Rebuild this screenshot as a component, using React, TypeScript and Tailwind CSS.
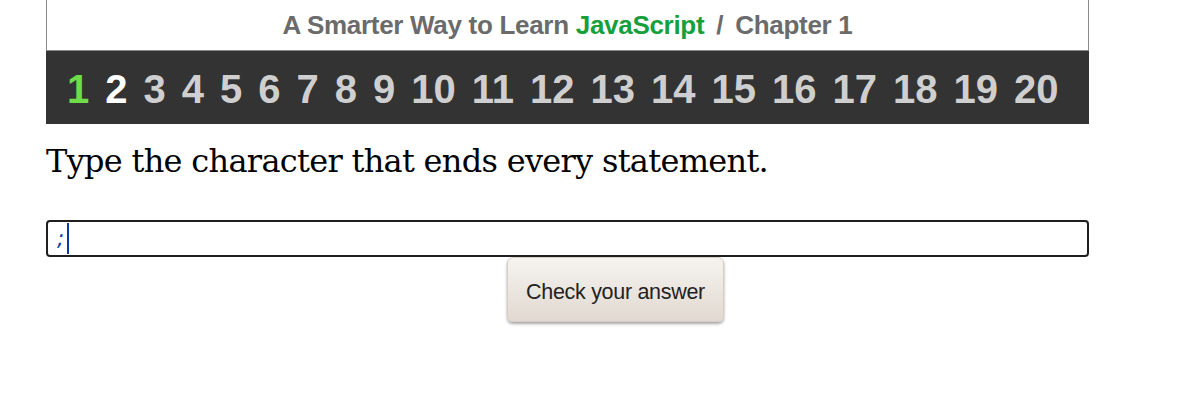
import React from 'react';

const chapters = Array.from({ length: 20 }, (_, i) => i + 1);

const App: React.FC = () => {
  return (
    <div className="w-[1189px] h-[412px] bg-white overflow-hidden">
      <div className="ml-[46px] w-[1043px]">
        <div className="h-[51px] border-x border-b border-[#8a8a8a] flex items-center justify-center pt-[1px] font-['Liberation_Sans',Arial,sans-serif] font-bold text-[26px] text-[#6b6b6b] tracking-[-0.3px]">
          <span>A Smarter Way to Learn</span>
          <span className="ml-[7px] text-[#16a03c]">JavaScript</span>
          <span className="mx-[12px]">/</span>
          <span>Chapter 1</span>
        </div>
        <div className="h-[73px] bg-[#333333] flex items-center gap-4 pl-[21px] pt-[2px] font-['Liberation_Sans',Arial,sans-serif] font-bold text-[40px] text-[#cfcfcf]">
          {chapters.map((n) => (
            <span
              key={n}
              className={n === 1 ? 'text-[#6fdc4a]' : n === 2 ? 'text-white' : ''}
            >
              {n}
            </span>
          ))}
        </div>
        <p className="mt-[17px] font-['DejaVu_Serif',Georgia,serif] text-[32px] leading-[40px] text-black tracking-[-0.7px]">
          Type the character that ends every statement.
        </p>
        <div className="mt-[39px] h-[37px] border-2 border-[#1f1f1f] rounded-[4px] flex items-center pl-[9px]">
          <span className="font-['DejaVu_Sans',sans-serif] text-[21px] italic text-[#0b3aa8] leading-none">;</span>
          <span className="ml-[3px] w-[2px] h-[31px] bg-[#0b3aa8]" />
        </div>
        <div className="ml-[461px] mt-0 w-[217px]">
          <button className="w-[217px] h-[65px] pt-[5px] rounded-[6px] bg-gradient-to-b from-[#f6f3f0] to-[#e1d9d0] shadow-[0_2px_3px_rgba(0,0,0,0.35)] border border-[#d6cec4] font-['Liberation_Sans',Arial,sans-serif] text-[21.5px] text-[#222222] tracking-[-0.3px]">
            Check your answer
          </button>
        </div>
      </div>
    </div>
  );
};

export default App;
